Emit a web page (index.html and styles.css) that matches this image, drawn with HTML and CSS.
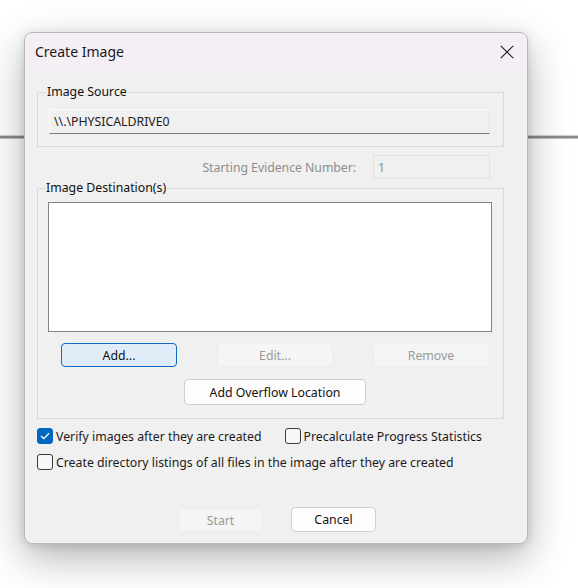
FILE: index.html
```html
<!DOCTYPE html>
<html lang="en">
<head>
<meta charset="utf-8">
<title>Create Image</title>
<link rel="stylesheet" href="styles.css">
</head>
<body>
<div class="dialog">
  <div class="titlebar">
    <span class="title">Create Image</span>
    <button class="close" aria-label="Close">
      <svg width="14" height="14" viewBox="0 0 14 14"><path d="M0.8 0.8 L13.2 13.2 M13.2 0.8 L0.8 13.2" stroke="#1a1a1a" stroke-width="1.1" fill="none"/></svg>
    </button>
  </div>
  <div class="content">
    <fieldset class="group source">
      <legend>Image Source</legend>
      <div class="field readonly">\\.\PHYSICALDRIVE0</div>
    </fieldset>
    <div class="evidence-row">
      <span class="evidence-label">Starting Evidence Number:</span>
      <div class="field disabled evidence">1</div>
    </div>
    <fieldset class="group dest">
      <legend>Image Destination(s)</legend>
      <div class="listbox"></div>
      <div class="btn-row">
        <button class="btn default">Add...</button>
        <button class="btn off">Edit...</button>
        <button class="btn off">Remove</button>
      </div>
      <button class="btn normal overflow">Add Overflow Location</button>
    </fieldset>
    <div class="checks">
      <div class="check-row">
        <label class="check"><span class="box checked"><svg width="10" height="8" viewBox="0 0 10 8"><path d="M1 4 L3.8 6.6 L9 1.2" stroke="#fff" stroke-width="1.3" fill="none"/></svg></span>Verify images after they are created</label>
        <label class="check second"><span class="box"></span>Precalculate Progress Statistics</label>
      </div>
      <div class="check-row">
        <label class="check"><span class="box"></span>Create directory listings of all files in the image after they are created</label>
      </div>
    </div>
    <div class="footer">
      <button class="btn off foot">Start</button>
      <button class="btn normal foot cancel">Cancel</button>
    </div>
  </div>
</div>
</body>
</html>
```

FILE: styles.css
```css
html, body {
  margin: 0;
  padding: 0;
}
body {
  width: 578px;
  height: 588px;
  overflow: hidden;
  background:
    linear-gradient(to bottom,
      transparent 0, transparent 135px,
      #cfcfcf 135px, #cfcfcf 136px,
      #8a8a8a 136px, #8a8a8a 138px,
      #bdbdbd 138px, #bdbdbd 139px,
      transparent 139px) ,
    #ffffff;
  font-family: "Noto Sans", "Open Sans", sans-serif;
  font-size: 12.3px;
  color: #1b1b1b;
  padding: 32px 0 0 24px;
  box-sizing: border-box;
}
.dialog {
  width: 504px;
  height: 512px;
  box-sizing: border-box;
  border: 1px solid #b9b9b9;
  border-radius: 8px;
  background: #f0f0f0;
  box-shadow: 0 14px 40px rgba(0, 0, 0, 0.30), 0 2px 8px rgba(0, 0, 0, 0.12);
  overflow: hidden;
}
.titlebar {
  height: 37px;
  background: #f5eef5;
  display: flex;
  align-items: center;
  justify-content: space-between;
  padding: 0 13px 0 10px;
}
.title {
  font-size: 14px;
  color: #1a1a1a;
}
.close {
  border: 0;
  background: transparent;
  padding: 0;
  width: 14px;
  height: 14px;
  display: flex;
}
.content {
  padding: 14px 0 0 12px;
}
.group {
  margin: 0;
  width: 467px;
  box-sizing: border-box;
  border: 1px solid #dadada;
  min-width: 0;
}
.group legend {
  line-height: 16px;
  padding: 0 1px;
  margin-left: -3px;
  color: #111;
}
.source {
  padding: 9px 13px 12px 11px;
}
.field {
  box-sizing: border-box;
  height: 25px;
  display: flex;
  align-items: center;
  padding-left: 4px;
}
.readonly {
  background: #f0f0f0;
  border: 1px solid #e3e3e3;
  border-bottom: 1px solid #7c7c7c;
  border-top-color: #fbfbfb;
  border-left-color: #fbfbfb;
}
.evidence-row {
  margin-top: 8px;
  width: 467px;
  padding-right: 14px;
  box-sizing: border-box;
  display: flex;
  justify-content: flex-end;
  align-items: center;
  gap: 17px;
}
.evidence-label {
  color: #8d8d8d;
  letter-spacing: -0.05px;
}
.disabled {
  width: 117px;
  height: 24px;
  border: 1px solid #e2e2e2;
  background: #f0f0f0;
  color: #8d8d8d;
}
.dest {
  margin-top: 1px;
  padding: 6px 11px 13px 10px;
}
.listbox {
  height: 130px;
  box-sizing: border-box;
  border: 1px solid #828282;
  background: #ffffff;
}
.btn {
  font-family: inherit;
  font-size: 12.3px;
  box-sizing: border-box;
  border-radius: 4px;
  padding: 0;
  height: 24px;
}
.btn-row {
  margin-top: 11px;
  display: flex;
  gap: 40px;
  padding-left: 13px;
}
.btn-row .btn {
  width: 116px;
}
.default {
  background: #e0edf9;
  border: 1px solid #0f6ac0;
  color: #111;
}
.off {
  background: #f5f5f5;
  border: 1px solid #ececec;
  color: #9a9a9a;
}
.normal {
  background: #fdfdfd;
  border: 1px solid #d0d0d0;
  color: #111;
}
.overflow {
  display: block;
  margin: 12px 0 0 136px;
  width: 182px;
  height: 26px;
}
.checks {
  margin-top: 9px;
  display: flex;
  flex-direction: column;
  gap: 10px;
}
.check-row {
  display: flex;
  align-items: center;
  height: 16px;
}
.check {
  display: flex;
  align-items: center;
  gap: 3px;
}
.second {
  margin-left: 23px;
}
.box {
  width: 16px;
  height: 16px;
  box-sizing: border-box;
  border: 1px solid #3a3a3a;
  border-radius: 3px;
  background: #f7f7f7;
  display: flex;
  align-items: center;
  justify-content: center;
}
.box.checked {
  background: #0067c0;
  border-color: #0067c0;
}
.footer {
  margin-top: 37px;
  display: flex;
  gap: 28px;
  padding-left: 141px;
  align-items: flex-end;
}
.foot {
  width: 85px;
  height: 24px;
}
.cancel {
  height: 25px;
}
```
